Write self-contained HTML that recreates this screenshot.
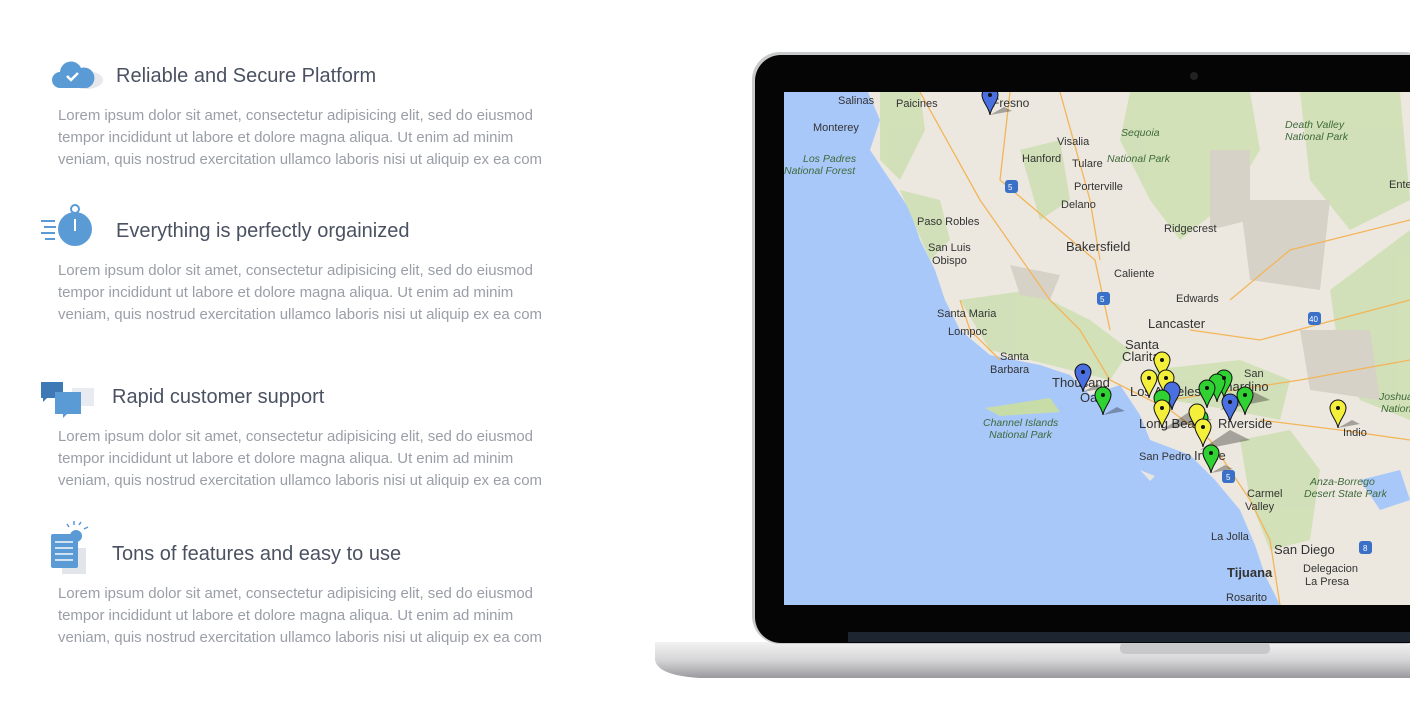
<!DOCTYPE html>
<html><head><meta charset="utf-8"><style>
body{margin:0;width:1410px;height:711px;background:#fff;overflow:hidden;position:relative;font-family:"Liberation Sans",sans-serif}
.h{position:absolute;left:116px;font-size:20px;color:#4a5262;white-space:nowrap;line-height:24px}
.p{position:absolute;left:58px;font-size:15px;color:#9a9ea6;line-height:22px;white-space:nowrap;letter-spacing:-0.05px}
svg{position:absolute;left:0;top:0}
</style></head><body>
<div class="h" style="top:64px">Reliable and Secure Platform</div>
<div class="p" style="top:105px">Lorem ipsum dolor sit amet, consectetur adipisicing elit, sed do eiusmod<br>tempor incididunt ut labore et dolore magna aliqua. Ut enim ad minim<br>veniam, quis nostrud exercitation ullamco laboris nisi ut aliquip ex ea com</div>
<div class="h" style="top:219px">Everything is perfectly orgainized</div>
<div class="p" style="top:260px">Lorem ipsum dolor sit amet, consectetur adipisicing elit, sed do eiusmod<br>tempor incididunt ut labore et dolore magna aliqua. Ut enim ad minim<br>veniam, quis nostrud exercitation ullamco laboris nisi ut aliquip ex ea com</div>
<div class="h" style="top:385px;left:112px">Rapid customer support</div>
<div class="p" style="top:426px">Lorem ipsum dolor sit amet, consectetur adipisicing elit, sed do eiusmod<br>tempor incididunt ut labore et dolore magna aliqua. Ut enim ad minim<br>veniam, quis nostrud exercitation ullamco laboris nisi ut aliquip ex ea com</div>
<div class="h" style="top:542px;left:112px">Tons of features and easy to use</div>
<div class="p" style="top:583px">Lorem ipsum dolor sit amet, consectetur adipisicing elit, sed do eiusmod<br>tempor incididunt ut labore et dolore magna aliqua. Ut enim ad minim<br>veniam, quis nostrud exercitation ullamco laboris nisi ut aliquip ex ea com</div>

<svg width="1410" height="711" viewBox="0 0 1410 711">
<defs>
<clipPath id="scr"><rect x="784" y="92" width="626" height="513"/></clipPath>
<linearGradient id="base" x1="0" y1="0" x2="0" y2="1"><stop offset="0" stop-color="#f2f2f2"/><stop offset=".5" stop-color="#d6d6d8"/><stop offset="1" stop-color="#9a9a9e"/></linearGradient>
<path id="pin" d="M0,0 C-1,-8 -8,-13 -8,-20 A8,8 0 1 1 8,-20 C8,-13 1,-8 0,0Z" stroke="#111" stroke-width="1"/>
</defs>
<g fill="#5a9bd6">
<ellipse cx="86" cy="80" rx="17" ry="9" fill="#e6e8eb"/>
<path d="M60,88 a8,8 0 0 1 0,-16 a11,11 0 0 1 21,-4 a8,8 0 0 1 6,20Z"/>
<path d="M67,76 l4,4 l7,-7" stroke="#fff" stroke-width="2.5" fill="none"/>
<circle cx="75" cy="229" r="17"/>
<circle cx="75" cy="209" r="4" fill="none" stroke="#5a9bd6" stroke-width="2"/>
<rect x="74" y="219" width="2" height="12" fill="#fff"/>
<rect x="41" y="220" width="14" height="2"/><rect x="44" y="226" width="12" height="2"/><rect x="41" y="232" width="14" height="2"/><rect x="45" y="238" width="10" height="2"/>
<rect x="72" y="388" width="22" height="18" fill="#e8ebef"/>
<path d="M41,382 h22 v16 h-16 l-4,4 v-4 h-2z" fill="#3e78b5"/>
<path d="M55,392 h26 v22 h-14 l-4,4 v-4 h-8z" fill="#5a9bd6"/>
<rect x="62" y="548" width="24" height="26" fill="#e2e5e9"/>
<rect x="51" y="534" width="27" height="34" rx="2"/>
<circle cx="76" cy="536" r="6"/>
<g fill="#cfe1f3"><rect x="55" y="541" width="18" height="2"/><rect x="55" y="547" width="18" height="2"/><rect x="55" y="553" width="18" height="2"/><rect x="55" y="559" width="18" height="2"/></g>
<g stroke="#5a9bd6" stroke-width="1.5"><line x1="69" y1="527" x2="67" y2="524"/><line x1="74" y1="525" x2="74" y2="521"/><line x1="79" y1="525" x2="81" y2="522"/><line x1="84" y1="529" x2="88" y2="527"/></g>
</g>
<path d="M655,642 H1410 V678 H700 C670,676 657,670 655,660Z" fill="url(#base)"/>
<rect x="1120" y="642" width="150" height="12" rx="5" fill="#c8c8cb"/>
<rect x="752" y="52" width="680" height="592" rx="28" fill="#c9cacc"/>
<rect x="755" y="55" width="680" height="588" rx="26" fill="#050505"/>
<rect x="848" y="632" width="562" height="10" fill="#1d2530"/>
<circle cx="1194" cy="76" r="4" fill="#222"/>
<g clip-path="url(#scr)">
<rect x="784" y="92" width="626" height="513" fill="#a9c8fa"/>
<path d="M868,92 L880,120 L870,150 L890,180 L910,210 L920,240 L935,270 L945,300 L960,330 L990,355 L1040,365 L1070,375 L1090,395 L1120,385 L1140,415 L1150,440 L1190,455 L1215,480 L1240,510 L1255,545 L1265,575 L1280,605 L1410,605 L1410,92Z" fill="#ece8df"/>
<g fill="#cfe0b4" opacity=".9">
<path d="M880,92 L920,92 L925,130 L900,180 L880,160Z"/>
<path d="M960,300 L1030,290 L1090,320 L1130,350 L1110,380 L1050,365 L990,350Z"/>
<path d="M1130,92 L1250,92 L1260,150 L1230,200 L1180,240 L1150,200 L1120,140Z"/>
<path d="M1300,92 L1400,92 L1410,200 L1350,230 L1310,180Z"/>
<path d="M1330,290 L1410,230 L1410,420 L1360,400 L1340,360Z"/>
<path d="M1150,370 L1240,360 L1290,380 L1280,420 L1230,410 L1170,400Z"/>
<path d="M1240,440 L1290,430 L1320,470 L1310,540 L1270,550 L1250,500Z"/>
<path d="M900,190 L940,200 L950,240 L930,260Z"/>
<path d="M1020,150 L1060,140 L1070,200 L1040,220Z"/>
</g>
<g fill="#d6d2c8"><path d="M1210,150 L1250,150 L1250,220 L1210,230Z"/><path d="M1240,200 L1330,200 L1320,290 L1250,280Z"/><path d="M1300,330 L1370,330 L1380,400 L1310,390Z"/><path d="M1010,265 L1060,275 L1050,300 L1020,295Z"/></g>
<path d="M1360,480 L1400,470 L1410,500 L1380,510Z" fill="#a9c8fa"/>
<path d="M985,408 L1050,398 L1060,412 L1000,416Z" fill="#c8dca8"/>
<path d="M1140,470 l15,6 l-5,5 z" fill="#e8e6e0"/>
<g fill="none" stroke="#f3b55a" stroke-width="1.3">
<path d="M920,92 L980,200 L1050,300 L1080,330 L1110,380 L1170,410 L1210,440 L1250,500 L1270,540 L1280,605"/>
<path d="M1010,92 L1000,180 L1095,260 L1110,330"/>
<path d="M1060,92 L1090,200 L1100,260"/>
<path d="M1170,400 L1300,380 L1410,360"/>
<path d="M1190,330 L1260,340 L1410,300"/>
<path d="M1260,420 L1340,430 L1410,440"/>
<path d="M1230,300 L1290,250 L1410,220"/>
<path d="M960,300 L970,330 L1000,360"/>
</g>
<g font-family="Liberation Sans,sans-serif" font-size="11" fill="#333">
<text x="838" y="104">Salinas</text><text x="896" y="107">Paicines</text><text x="813" y="131">Monterey</text>
<text x="1057" y="145">Visalia</text><text x="1022" y="162">Hanford</text><text x="1072" y="167">Tulare</text>
<text x="1074" y="190">Porterville</text><text x="1061" y="208">Delano</text><text x="917" y="225">Paso Robles</text>
<text x="1164" y="232">Ridgecrest</text><text x="928" y="251">San Luis</text><text x="932" y="264">Obispo</text>
<text x="1114" y="277">Caliente</text><text x="1176" y="302">Edwards</text><text x="937" y="317">Santa Maria</text>
<text x="948" y="335">Lompoc</text><text x="1000" y="360">Santa</text><text x="990" y="373">Barbara</text>
<text x="1244" y="377">San</text><text x="1139" y="460">San Pedro</text><text x="1211" y="540">La Jolla</text>
<text x="1245" y="510">Valley</text><text x="1247" y="497">Carmel</text><text x="1303" y="572">Delegacion</text>
<text x="1305" y="585">La Presa</text><text x="1226" y="601">Rosarito</text><text x="1389" y="188">Ente</text>
<text x="1343" y="436">Indio</text>
<text x="1066" y="251" font-size="13">Bakersfield</text><text x="1148" y="328" font-size="13">Lancaster</text>
<text x="1125" y="349" font-size="13">Santa</text><text x="1122" y="361" font-size="13">Clarita</text>
<text x="1052" y="387" font-size="13">Thousand</text><text x="1080" y="402" font-size="13">Oa</text>
<text x="1130" y="396" font-size="13">Los Angeles</text><text x="1205" y="391" font-size="13">Bernardino</text>
<text x="1218" y="428" font-size="13">Riverside</text><text x="1139" y="428" font-size="13">Long Beach</text>
<text x="1194" y="460" font-size="13">Irvine</text><text x="1274" y="554" font-size="13">San Diego</text>
<text x="1227" y="577" font-size="13" font-weight="bold">Tijuana</text><text x="992" y="107" font-size="12">Fresno</text>
<g font-style="italic" fill="#3f6a3a" font-size="10.5"><text x="803" y="162">Los Padres</text><text x="784" y="174">National Forest</text>
<text x="1121" y="136">Sequoia</text><text x="1107" y="162">National Park</text><text x="1285" y="128">Death Valley</text><text x="1285" y="140">National Park</text>
<text x="983" y="426">Channel Islands</text><text x="989" y="438">National Park</text><text x="1310" y="485">Anza-Borrego</text><text x="1304" y="497">Desert State Park</text>
<text x="1379" y="400">Joshua Tree</text><text x="1381" y="412">National Park</text></g>
</g>
<g font-size="8" font-family="Liberation Sans,sans-serif" fill="#fff">
<rect x="1005" y="180" width="13" height="13" rx="3" fill="#3a70c8"/><rect x="1097" y="292" width="13" height="13" rx="3" fill="#3a70c8"/><rect x="1222" y="470" width="13" height="13" rx="3" fill="#3a70c8"/><rect x="1308" y="312" width="13" height="13" rx="3" fill="#3a70c8"/><rect x="1359" y="541" width="13" height="13" rx="3" fill="#3a70c8"/>
<text x="1008" y="190">5</text><text x="1100" y="302">5</text><text x="1226" y="480">5</text><text x="1309" y="322">40</text><text x="1363" y="551">8</text>
</g>
<g>
<g fill="rgba(0,0,0,.3)"><path d="M990,115 l14,-8 l8,4z"/><path d="M1083,392 l14,-8 l8,4z"/><path d="M1103,415 l14,-8 l8,4z"/><path d="M1211,473 l14,-8 l8,4z"/><path d="M1338,428 l14,-8 l8,4z"/><path d="M1162,430 l30,-20 l20,10z"/><path d="M1200,450 l30,-20 l20,10z"/><path d="M1220,410 l30,-20 l20,10z"/></g>
<use href="#pin" x="990" y="115" fill="#4a6fe0"/><use href="#pin" x="1083" y="392" fill="#4a6fe0"/><use href="#pin" x="1103" y="415" fill="#2fd232"/>
<use href="#pin" x="1162" y="380" fill="#f4ef3a"/><use href="#pin" x="1149" y="398" fill="#f4ef3a"/><use href="#pin" x="1166" y="398" fill="#f4ef3a"/>
<use href="#pin" x="1172" y="410" fill="#4a6fe0"/><use href="#pin" x="1162" y="418" fill="#2fd232"/><use href="#pin" x="1162" y="428" fill="#f4ef3a"/>
<use href="#pin" x="1224" y="398" fill="#2fd232"/><use href="#pin" x="1217" y="402" fill="#2fd232"/><use href="#pin" x="1207" y="408" fill="#2fd232"/>
<use href="#pin" x="1245" y="415" fill="#2fd232"/><use href="#pin" x="1230" y="422" fill="#4a6fe0"/>
<use href="#pin" x="1200" y="438" fill="#2fd232"/><use href="#pin" x="1197" y="432" fill="#f4ef3a"/><use href="#pin" x="1203" y="447" fill="#f4ef3a"/>
<use href="#pin" x="1211" y="473" fill="#2fd232"/><use href="#pin" x="1338" y="428" fill="#f4ef3a"/>
</g>
<g fill="#111"><circle cx="990" cy="95" r="2"/><circle cx="1083" cy="372" r="2"/><circle cx="1103" cy="395" r="2"/><circle cx="1162" cy="360" r="2"/><circle cx="1149" cy="378" r="2"/><circle cx="1166" cy="378" r="2"/><circle cx="1162" cy="408" r="2"/><circle cx="1224" cy="378" r="2"/><circle cx="1207" cy="388" r="2"/><circle cx="1245" cy="395" r="2"/><circle cx="1230" cy="402" r="2"/><circle cx="1203" cy="427" r="2"/><circle cx="1211" cy="453" r="2"/><circle cx="1338" cy="408" r="2"/></g>
</g>
</svg>
</body></html>
